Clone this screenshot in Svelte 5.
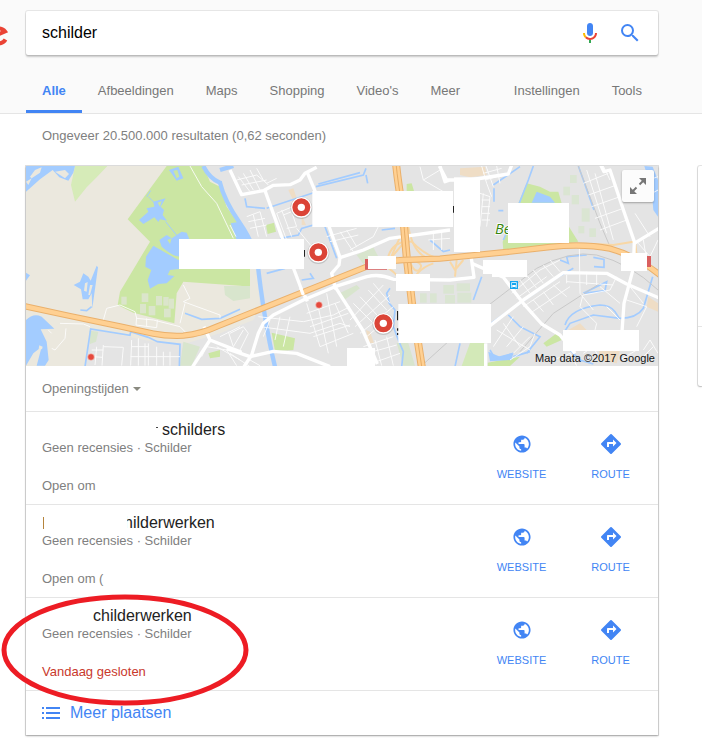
<script lang="ts">
  type Place = {
    gap: number;
    mark?: "dot" | "bar";
    cut?: boolean;
    name: string;
    hours: string;
    closed?: boolean;
    circled?: boolean;
  };

  const tabs = ["Alle", "Afbeeldingen", "Maps", "Shopping", "Video's", "Meer"];
  const tools = ["Instellingen", "Tools"];

  const places: Place[] = [
    { gap: 120, mark: "dot", name: "schilders", hours: "Open om" },
    { gap: 82, mark: "bar", cut: true, name: "hilderwerken", hours: "Open om (" },
    { gap: 51, name: "childerwerken", hours: "Vandaag gesloten", closed: true, circled: true },
  ];

  // map geometry, three units per pixel
  const highway =
    "M10 438L150 468L300 499L400 521Q440 529 490 527Q545 521 590 500L630 484L730 444L930 364L1040 320Q1090 302 1150 300L1260 296L1460 276L1590 261Q1690 250 1770 266Q1850 288 1920 345";
  const ring = "M1128 10Q1134 70 1148 150L1160 290L1176 430L1206 625";

  const water = [
    "M18 18H165L160 38L145 62L118 52L98 30L60 58L18 95Z",
    "M447 30L475 20L490 55L470 62Z",
    "M357 180L385 155L380 145L403 140L400 125L437 115L422 140L432 150L428 165L441 182L420 178L415 186L403 172L370 192Z",
    "M418 240L440 225L455 235L485 215L500 218L508 237H480V290L455 285L425 260Z",
    "M400 257L440 280L477 300V327L450 330L443 345L463 348L440 370L415 372L390 386L383 360L394 330L376 320L378 290Z",
    "M161 375L180 365L190 340L205 350L212 362L230 317L234 322L217 445L215 400L205 418H188L183 388Z",
    "M18 338L30 346L18 362Z",
    "M18 480Q40 458 65 470L103 506L62 508L80 545L86 600L75 617H50L65 560L40 580L18 617Z",
    "M632 190L660 185L690 240H650Z",
    "M1550 95L1590 110L1605 128H1535Z",
    "M1873 18L1898 20L1914 60V170L1900 150L1895 90Z",
    "M1405 575L1440 590L1480 578L1475 600L1410 604Z",
  ];

  const rivers = [
    "M550 18Q568 55 600 68Q612 120 660 190Q695 240 712 300Q720 380 735 470Q750 560 765 620",
    "M600 30L640 18",
  ];

  const canals = [
    "M195 620L212 507L330 526L332 515L385 532L412 545L480 553L478 620",
    "M181 450L200 452L215 440",
    "M495 460L545 478L600 475L660 448",
    "M888 80L1030 45L1038 25M895 72L1020 38M1038 45L1043 70",
    "M740 145L885 97M675 115L680 140L735 145",
    "M915 200L950 295M780 235L835 225L845 205L880 195",
    "M740 340L795 325M845 360L880 355L870 340",
    "M1110 385L1100 400L1108 430L1125 450L1120 500L1135 540L1150 575L1145 620",
    "M1085 210L1125 205M1230 240L1270 275L1290 270",
    "M1420 75L1500 20M1490 150L1525 60L1540 18M1450 240L1490 150M1422 85L1422 125M1435 152H1450",
    "M1675 18L1690 60L1722 150",
    "M1360 420L1385 350M1395 340L1398 310",
    "M1413 490L1485 440L1615 350L1660 325M1620 300L1645 310L1640 290L1700 285",
    "M1465 465L1500 500L1560 530L1520 580",
    "M1690 400L1760 365L1755 392Z",
    "M1635 495Q1650 445 1740 435Q1770 435 1785 455L1798 475M1630 520L1650 490L1720 465L1800 475Q1850 475 1870 445L1898 350",
    "M1320 550L1305 620M1650 570L1680 600L1720 612",
    "M1410 570L1425 595L1480 580M1480 590L1530 575",
    "M1720 292L1752 298V322L1722 320",
  ];

  const streets = [
    "M510 18L545 80L590 130L640 235M630 195L648 230",
    "M250 480L260 445L300 435L345 455L350 475L400 480L480 500L500 520M490 375L510 415L490 425L600 465L600 475M480 490L495 430",
    "M95 565L105 570L135 535L138 505M85 510L95 520M120 490L190 492L210 500",
    "M350 470L348 495L410 503L412 480M380 475V498",
    "M215 570H250M220 590L248 592M230 560L225 615M250 555L246 617M250 560L310 562L305 617M335 540L332 617M355 535V617M375 550V617M385 550V617M335 560H385M332 590H480M410 560V617M430 575V617M450 575V617",
    "M590 560L660 600M600 530L660 500M625 515L640 560M545 590L560 560L620 570L650 617",
    "M655 50L690 95M650 60L710 45L740 70L770 55M670 40L700 90M690 30L720 90M710 25L730 60L745 75M665 75L740 60",
    "M770 160L800 240M770 160L830 135M785 150L815 230M790 165L815 155L830 200L800 205M830 205L900 290",
    "M680 170L720 155L740 230M685 185L735 175M690 205L740 195M700 165L715 230",
    "M920 230L1010 205M930 245L1015 225M940 250L960 290M960 215L1000 275M980 210L1010 260M990 270L1060 230L1075 200",
    "M715 470L850 485L940 465L990 440M750 480L730 530M780 470L765 540M810 470L790 560M720 500L870 520L960 490L990 500",
    "M860 430L900 560M890 420L925 580M920 400L950 560M945 430L985 520M860 460L960 425M870 500L985 460M880 530L990 495M900 560L1000 520",
    "M990 480L1090 375M1005 500L1110 405M1020 520L1120 440M1040 530L1100 480M1000 430L1060 490M1020 410L1085 480M1045 390L1100 450M1060 370L1110 430",
    "M1030 560L1120 530M1040 580L1130 555M1055 610L1140 580M1065 540L1085 617M1100 530L1120 617",
    "M630 520L670 500L685 520L660 570M640 560L670 510M630 580L690 620M690 600L720 617",
    "M1200 20L1210 60L1270 95M1210 60L1260 30M1220 220L1290 210M1225 240L1290 235M1240 212V270M1265 210V270",
    "M1385 18L1400 70L1415 110M1398 18L1420 80M1430 18L1440 70M1390 40L1445 25M1395 60L1450 45",
    "M1380 100L1410 110L1400 200M1385 120H1410M1385 140H1410M1385 160H1410M1385 180H1410M1390 100L1380 200",
    "M1700 30L1760 220M1725 40L1780 240M1690 70L1765 40M1705 105L1790 75M1715 140L1800 110M1725 175L1810 145M1740 210L1820 180M1750 18L1770 60",
    "M1830 80L1914 50M1860 120L1914 90M1845 160L1890 230M1855 250L1890 290L1914 240M1870 240L1880 300",
    "M1475 400L1560 330L1620 300M1490 415L1580 350M1500 360L1530 400M1520 345L1550 385M1540 330L1570 370M1570 315L1600 350M1590 300L1620 335",
    "M1510 440L1620 365M1530 460L1650 380M1540 420L1570 455M1570 395L1600 435M1600 375L1640 410",
    "M1678 262L1680 400L1720 450M1700 335V375M1730 340V375M1640 365L1780 375M1640 345V370M1790 350L1770 390L1690 405",
    "M1430 510L1530 570M1450 490L1500 560M1480 470L1420 560M1510 500L1460 560M1530 530L1480 580M1545 520L1530 560L1470 600",
    "M1690 400L1680 440L1730 490L1725 510M1740 380L1800 430M1760 440L1800 480M1820 420L1880 440L1850 500M1830 380L1870 430",
    "M1690 580L1720 560L1740 600M1870 570L1890 540L1914 580M1860 600L1900 560M1800 600L1850 570M1600 600L1650 580L1670 617",
  ];

  const roads = [
    "M630 30L665 104L730 92L760 76L810 74L840 60L855 40L890 22",
    "M735 92L785 230L845 390L860 422",
    "M862 38L915 165L960 292L957 315L935 340L945 380L1028 510L1072 612",
    "M960 293L1030 270L1110 235L1290 210",
    "M672 620L695 585L715 520L730 490L760 465L850 420L945 380L1040 350Q1080 340 1120 358L1290 360L1362 352L1352 280",
    "M620 566L690 590L760 574L830 580L930 620",
    "M518 620L570 540L552 500M570 540L665 577",
    "M1258 18L1280 60L1350 60L1465 42L1475 15M1260 18L1275 65L1290 60",
    "M1355 310L1450 352L1510 430L1565 492L1620 525L1665 580",
    "M1410 497L1510 420L1630 338L1760 340L1820 372L1920 415",
    "M1742 15L1752 35L1770 30L1812 155L1843 245L1840 325L1812 430L1806 515",
    "M1843 250L1920 203",
    "M1397 550V620",
  ];

  const ramps = [
    "M1100 310Q1110 240 1175 245Q1220 290 1260 296",
    "M1110 300Q1150 200 1165 200Q1180 290 1240 300",
    "M1095 320Q1140 340 1150 390M1170 390Q1180 330 1240 310",
    "M1170 300Q1220 310 1195 332Q1180 335 1170 305M1150 300Q1110 310 1120 285L1150 250",
    "M1720 252L1780 255L1840 245M1845 245L1850 285M1310 300L1305 350M1330 300L1305 330L1290 305",
  ];

  const pins = [
    [844, 142],
    [895, 277],
    [1090, 490],
  ];
  const dots = [
    [213, 591],
    [897, 435],
  ];

  // [x, y, width, height]
  const blanks = [
    [877, 93, 422, 108],
    [477, 237, 375, 90],
    [1044, 288, 84, 39],
    [1128, 342, 102, 51],
    [1135, 432, 278, 117],
    [981, 564, 84, 60],
    [1302, 52, 78, 224],
    [1464, 129, 183, 120],
    [1389, 300, 132, 42],
    [1416, 341, 105, 10],
    [1803, 279, 78, 54],
    [1629, 510, 228, 63],
  ];

  const fields = [
    [365, 400, 20, 26],
    [408, 408, 18, 28],
    [430, 411, 16, 26],
    [446, 416, 16, 30],
    [360, 432, 18, 28],
    [386, 438, 20, 28],
    [432, 446, 20, 26],
    [304, 410, 16, 24],
  ];

  const lots = [
    [1650, 45, 20, 24],
    [1630, 80, 20, 26],
    [1655, 105, 22, 28],
    [1685, 145, 24, 40],
    [1675, 198, 18, 22],
    [1708, 205, 20, 26],
    [1270, 375, 32, 26],
    [1310, 370, 40, 24],
    [1275, 405, 30, 25],
    [1312, 398, 42, 30],
    [1200, 400, 20, 28],
    [1230, 400, 20, 28],
  ];
</script>

<header class="top">
  <form class="search-row" role="search" onsubmit={(e) => e.preventDefault()}>
    <svg class="brand" viewBox="0 0 26 44" aria-hidden="true">
      <path d="M-9 26.500L5 20.500A7.500 7.500 0 1 0 5.500 28.500" />
    </svg>
    <div class="search-box">
      <input type="text" value="schilder" aria-label="Zoeken" />
      <button type="button" aria-label="Gesproken zoekopdracht">
        <svg viewBox="0 0 24 24">
          <path fill="#4285f4" d="M12 15c1.700 0 3-1.300 3-3V5c0-1.700-1.300-3-3-3S9 3.300 9 5v7c0 1.700 1.300 3 3 3z" />
          <path fill="#34a853" d="M11 18.500h2V22h-2z" />
          <path fill="#fbbc05" d="M7 12H5c0 2 .8 3.800 2.100 5l1.400-1.400C7.600 14.700 7 13.400 7 12z" />
          <path fill="#ea4335" d="M12 17c-1.400 0-2.600-.5-3.500-1.400L7.100 17c1.300 1.200 3 2 4.900 2 3.900 0 7-3.100 7-7h-2c0 2.800-2.200 5-5 5z" />
        </svg>
      </button>
      <button type="submit" aria-label="Google zoeken">
        <svg viewBox="0 0 24 24">
          <path
            fill="#4285f4"
            d="M15.500 14h-.8l-.3-.3A6.500 6.500 0 0 0 16 9.500 6.500 6.500 0 1 0 9.500 16c1.600 0 3.100-.6 4.200-1.600l.3.300v.8l5 5 1.500-1.500-5-5zm-6 0a4.500 4.500 0 1 1 0-9 4.500 4.500 0 0 1 0 9z"
          />
        </svg>
      </button>
    </div>
  </form>
  <nav class="tabs">
    {#each tabs as tab, i}
      <a href="#{tab}" class:active={i === 0}>{tab}</a>
    {/each}
    <span class="spacer"></span>
    {#each tools as tool}
      <a href="#{tool}">{tool}</a>
    {/each}
  </nav>
</header>

<div class="stats">Ongeveer 20.500.000 resultaten (0,62 seconden)</div>

<div class="columns">
  <main class="card">
    <div class="map">
      <svg viewBox="18 18 1896 600" preserveAspectRatio="xMidYMid slice" role="img" aria-label="Kaart">
        <rect x="18" y="18" width="1896" height="600" fill="#ebe8de" />
        <path
          fill="#e4e4e4"
          d="M550 18H1914V618H193L212 507L400 545L500 550L600 520L700 480L720 440L705 290L655 190L600 80Z"
        />
        <path fill="#d6ebb8" d="M165 18H262L230 52L200 82L165 125L153 75Z" />
        <path
          fill="#cbe6a3"
          d="M440 18H550L570 65L600 80L620 140L655 190L690 250L690 380L660 377L490 365L470 400L463 490L340 458L293 435L300 395L390 245L323 178L380 100Z"
        />
        <path fill="#cbe6a3" d="M755 518L825 535L820 570L765 573ZM738 195L762 188L768 215L743 222ZM1160 72L1175 70L1182 93H1160ZM565 580L600 570L600 590L570 595Z" />
        <path fill="#cbe6a3" d="M1495 130L1520 70L1560 80L1590 95L1615 95L1625 130L1647 200L1675 245L1590 258L1450 272L1448 245ZM1570 550L1610 520L1625 540L1580 560ZM1403 608L1500 590L1470 618H1403Z" />
        <path fill="#d3e9b8" d="M1350 549H1395V618H1325Z" />
        <path fill="#d8e5cd" d="M612 378L690 378V415L640 423L615 405ZM1010 285L1060 262L1075 290L1030 312ZM958 400L1010 375L1020 385L970 422ZM490 545L540 560L515 617H480ZM208 512L235 515L228 545L210 552ZM1130 549H1165L1185 617H1150Z" />
        <path fill="#efddc5" d="M805 90L820 85L830 115L818 118ZM845 165L858 195H845ZM1320 25L1395 20L1400 45L1350 52L1320 45ZM1038 510L1050 515L1062 550L1045 548ZM1885 410L1914 430V455L1880 440ZM1735 560L1800 570L1790 610L1740 600ZM1645 510L1680 490L1700 510Z" />
        {#each lots as [x, y, width, height]}
          <rect {x} {y} {width} {height} fill="#dae5d2" />
        {/each}
        {#each fields as [x, y, width, height]}
          <rect {x} {y} {width} {height} fill="#dbe5cb" />
        {/each}

        {#each water as d}
          <path fill="#a3ccff" {d} />
        {/each}
        <path fill="#ebe8de" d="M30 50L45 30L65 22L60 38L35 55ZM105 35L135 30L147 42L135 55ZM18 65L35 55L25 75Z" />
        <path fill="#cbe6a3" d="M460 32L472 30L478 50L470 55ZM413 128L425 123L420 140ZM442 240L455 235L450 252Z" />
        <path stroke="#cbe6a3" stroke-width="5" d="M395 250L477 298" />
        <path fill="#ebe8de" d="M195 370L203 366L200 395L192 392ZM210 375H218L210 405H205ZM58 556L68 560L66 568L56 566Z" />
        <g fill="none" stroke="#a3ccff">
          {#each rivers as d}
            <path stroke-width="13" {d} />
          {/each}
          {#each canals as d}
            <path stroke-width="5" {d} />
          {/each}
          <path stroke-width="3" d="M380 110L392 92M385 110L405 130M437 185L475 232" />
        </g>

        <g fill="none" stroke="#c9c9c9" stroke-width="3">
          <path d="M1675 18L1740 190L1770 260M1400 440L1550 325Q1650 270 1730 285Q1830 310 1914 390M1500 575L1600 460L1740 370M1205 617L1290 540" />
        </g>
        <g class="streets">
          {#each streets as d}
            <path {d} />
          {/each}
        </g>
        <g fill="none" stroke="#f8d7a5" stroke-width="6">
          {#each ramps as d}
            <path {d} />
          {/each}
        </g>
        <g class="roads">
          {#each roads as d}
            <path {d} />
          {/each}
        </g>
        <g fill="none">
          <path stroke="#eab06b" stroke-width="24" d={ring} />
          <path stroke="#ffd092" stroke-width="18" d={ring} />
          <path stroke="#e7ae68" stroke-width="3" d={ring} />
          <path stroke="#eab06b" stroke-width="19" d={highway} />
          <path stroke="#ffd092" stroke-width="13" d={highway} />
        </g>
        <path stroke="#fff" stroke-width="10" d="M842 384L850 405M855 408L862 424M942 372L948 388" />

        <text class="park" x="1425" y="222">Be</text>
        <path fill="#d95f5f" d="M1035 297H1101V329H1035ZM1881 288H1893V321H1881Z" />
        <path fill="#222" d="M852 270H855V290H852ZM1299 138H1303V158H1299ZM1131 453H1135V481H1131ZM1131 505H1136V512H1131ZM1131 519H1136V525H1131Z" />
        {#each blanks as [x, y, width, height]}
          <rect {x} {y} {width} {height} fill="#fff" />
        {/each}

        <g transform="translate(1470 363)">
          <rect width="24" height="24" fill="#16a5ef" />
          <path fill="#fff" d="M4 4H20V20H17V18H7V20H4Z" />
          <path fill="#16a5ef" d="M6 6H18V12H6ZM6 14H9V16H6ZM15 14H18V16H15Z" />
        </g>
        {#each dots as [cx, cy]}
          <circle {cx} {cy} r="10" fill="#e5493d" stroke="#f4c4bc" stroke-width="2" />
        {/each}
        {#each pins as [cx, cy]}
          <circle {cx} cy={cy + 2} r="33" fill="#000" opacity="0.150" />
          <circle {cx} {cy} r="29" fill="#db4437" stroke="#fff" stroke-width="4" />
          <circle {cx} {cy} r="11" fill="#fff" />
        {/each}
      </svg>
      <button class="expand" type="button" aria-label="Kaart vergroten">
        <svg viewBox="0 0 16 16">
          <path d="M9.500 6.500L14 2M1.500 14.500L6.500 9.500" />
          <path class="heads" d="M9 0H16V7L13.500 4.500L11.500 2.500ZM0 9V16H7L4.500 13.500L2.500 11.500Z" />
        </svg>
      </button>
      <span class="attribution">Map data ©2017 Google</span>
    </div>

    <div class="filter">
      <button type="button">Openingstijden <span class="caret"></span></button>
    </div>

    {#each places as place}
      <article class="place">
        <div class="info">
          <h3>
            <span class="erased {place.mark ?? ''}" style="width: {place.gap}px"></span><span class:cut={place.cut}>{place.name}</span>
          </h3>
          <p>Geen recensies · Schilder</p>
          <p class="hours" class:closed={place.closed}>{place.hours}</p>
        </div>
        <a class="action" href="#website">
          <svg viewBox="-2 -2 28 28">
            <path
              d="M12 2C6.480 2 2 6.480 2 12s4.480 10 10 10 10-4.480 10-10S17.520 2 12 2zm-1 17.930c-3.950-.49-7-3.850-7-7.930 0-.62.08-1.210.21-1.790L9 15v1c0 1.100.9 2 2 2v1.930zm6.900-2.540c-.26-.81-1-1.390-1.900-1.390h-1v-3c0-.55-.45-1-1-1H8v-2h2c.55 0 1-.45 1-1V7h2c1.100 0 2-.9 2-2v-.41c2.930 1.190 5 4.060 5 7.410 0 2.080-.8 3.970-2.100 5.390z"
            />
          </svg>
          WEBSITE
        </a>
        <a class="action" href="#route">
          <svg viewBox="0 0 24 24">
            <path
              d="M21.710 11.290l-9-9a1 1 0 0 0-1.410 0l-9 9a1 1 0 0 0 0 1.410l9 9c.39.39 1.020.39 1.410 0l9-9a1 1 0 0 0 0-1.410zM14 14.500V12h-4v3H8v-4c0-.55.45-1 1-1h5V7.500l3.500 3.500-3.500 3.500z"
            />
          </svg>
          ROUTE
        </a>
        {#if place.circled}
          <svg class="circled" viewBox="0 0 248 112" aria-hidden="true">
            <ellipse cx="124" cy="56" rx="121" ry="53" />
          </svg>
        {/if}
      </article>
    {/each}

    <a class="more" href="#meer-plaatsen">
      <svg viewBox="0 0 18 12" aria-hidden="true">
        <path d="M0 1H2M4 1H18M0 6H2M4 6H18M0 11H2M4 11H18" />
      </svg>
      Meer plaatsen
    </a>
  </main>
  <aside class="side"></aside>
</div>

<style>
  :global(body) {
    background: #fff;
    font-family: "Liberation Sans", Arial, sans-serif;
    font-size: 13px;
    color: #808080;
    overflow-x: hidden;
  }

  a {
    color: inherit;
    text-decoration: none;
  }

  button {
    padding: 0;
    border: 0;
    background: none;
    font: inherit;
    color: inherit;
    cursor: pointer;
  }

  .top {
    background: #fafafa;
    border-bottom: 1px solid #e5e5e5;
    padding-top: 11px;
  }

  .search-row {
    display: flex;
    padding-right: 44px;
  }

  .brand {
    flex: 0 0 26px;
    height: 44px;
    fill: none;
    stroke: #ea4335;
    stroke-width: 4;
  }

  .search-box {
    flex: 1;
    display: flex;
    align-items: center;
    height: 44px;
    padding: 0 16px;
    background: #fff;
    border-radius: 2px;
    box-shadow: 0 0 0 1px rgba(0, 0, 0, 0.08), 0 2px 2px rgba(0, 0, 0, 0.2);
  }

  .search-box input {
    flex: 1;
    min-width: 0;
    padding: 0;
    border: 0;
    outline: 0;
    background: none;
    font: 16px "Liberation Sans", Arial, sans-serif;
    color: #000;
  }

  .search-box button {
    display: flex;
    margin-left: 16px;
  }

  .search-box svg {
    width: 24px;
    height: 24px;
  }

  .tabs {
    display: flex;
    margin-top: 16px;
    padding: 0 44px 0 26px;
    color: #777;
  }

  .tabs a {
    padding: 0 16px;
    line-height: 39px;
    height: 39px;
    border-bottom: 3px solid transparent;
  }

  .tabs .active {
    color: #4285f4;
    font-weight: bold;
    border-color: #4285f4;
  }

  .spacer {
    flex: 1;
  }

  .stats {
    padding: 0 42px;
    line-height: 44px;
    height: 52px;
  }

  .columns {
    display: flex;
    align-items: flex-start;
    gap: 40px;
    padding: 0 0 13px 26px;
  }

  .card {
    flex: 1;
    min-width: 0;
    box-shadow: 0 0 0 1px rgba(0, 0, 0, 0.12), 0 1px 2px rgba(0, 0, 0, 0.3);
  }

  .side {
    flex: 0 0 4px;
    height: 220px;
    border-radius: 2px 0 0 2px;
    background: linear-gradient(#e5e5e5, #e5e5e5) 0 160px / 100% 1px no-repeat;
    box-shadow: 0 0 0 1px rgba(0, 0, 0, 0.1), 0 1px 2px rgba(0, 0, 0, 0.2);
  }

  .map {
    position: relative;
    height: 200px;
  }

  .map > svg {
    display: block;
    width: 100%;
    height: 100%;
  }

  .streets,
  .roads {
    fill: none;
    stroke: #fff;
    stroke-linejoin: round;
  }

  .streets {
    stroke-width: 3;
    opacity: 0.85;
  }

  .roads {
    stroke-width: 10;
  }

  .park {
    font-family: "Open Sans", "Liberation Sans", sans-serif;
    font-size: 44px;
    font-style: italic;
    fill: #38850f;
    stroke: #fff;
    stroke-width: 5;
    paint-order: stroke;
  }

  .expand {
    position: absolute;
    top: 4px;
    right: 4px;
    width: 32px;
    height: 32px;
    background: #fcfcfc;
    border-radius: 2px;
    box-shadow: 0 1px 2px rgba(0, 0, 0, 0.3);
  }

  .expand svg {
    display: block;
    width: 16px;
    height: 16px;
    margin: 0 auto;
    fill: none;
    stroke: #777;
    stroke-width: 2;
  }

  .expand .heads {
    fill: #777;
    stroke: none;
  }

  .attribution {
    position: absolute;
    right: 3px;
    bottom: 1px;
    font-size: 11px;
    line-height: 14px;
    color: #111;
  }

  .filter {
    line-height: 45px;
    height: 45px;
    padding: 0 16px;
  }

  .filter button {
    display: flex;
    align-items: center;
    gap: 4px;
    height: 45px;
  }

  .caret {
    border: 4px solid transparent;
    border-top-color: #8a8a80;
    border-bottom: 0;
  }

  .place {
    position: relative;
    display: flex;
    height: 92px;
    padding: 0 3px 0 16px;
    border-top: 1px solid #e5e5e5;
  }

  .info {
    flex: 1;
    min-width: 0;
    padding-top: 9px;
  }

  h3 {
    display: flex;
    margin: 0;
    font-size: 16px;
    font-weight: normal;
    line-height: 18px;
    color: #222;
  }

  .erased {
    position: relative;
  }

  .dot::after,
  .bar::after {
    content: "";
    position: absolute;
    background: #444;
  }

  .dot::after {
    top: 6px;
    right: 4px;
    width: 2px;
    height: 1px;
  }

  .bar::after {
    top: 3px;
    left: 1px;
    width: 1px;
    height: 12px;
    background: #b5843c;
  }

  .cut {
    clip-path: inset(0 0 0 3px);
  }

  p {
    margin: 0;
    line-height: 18px;
  }

  .hours {
    margin-top: 20px;
  }

  .closed {
    color: #c9392c;
  }

  .action {
    display: flex;
    flex-direction: column;
    align-items: center;
    width: 89px;
    padding-top: 20px;
    gap: 11px;
    font-size: 11px;
    line-height: 14px;
    color: #4285f4;
  }

  .action svg {
    width: 24px;
    height: 24px;
    fill: #4285f4;
  }

  .circled {
    position: absolute;
    top: -4px;
    left: -25px;
    width: 248px;
    height: 112px;
    fill: none;
    stroke: #ed1c24;
    stroke-width: 5;
    pointer-events: none;
  }

  .more {
    display: flex;
    align-items: center;
    gap: 10px;
    height: 44px;
    padding: 0 16px;
    border-top: 1px solid #e5e5e5;
    font-size: 16px;
    color: #4285f4;
  }

  .more svg {
    width: 18px;
    height: 12px;
    stroke: #4285f4;
    stroke-width: 2;
  }
</style>
